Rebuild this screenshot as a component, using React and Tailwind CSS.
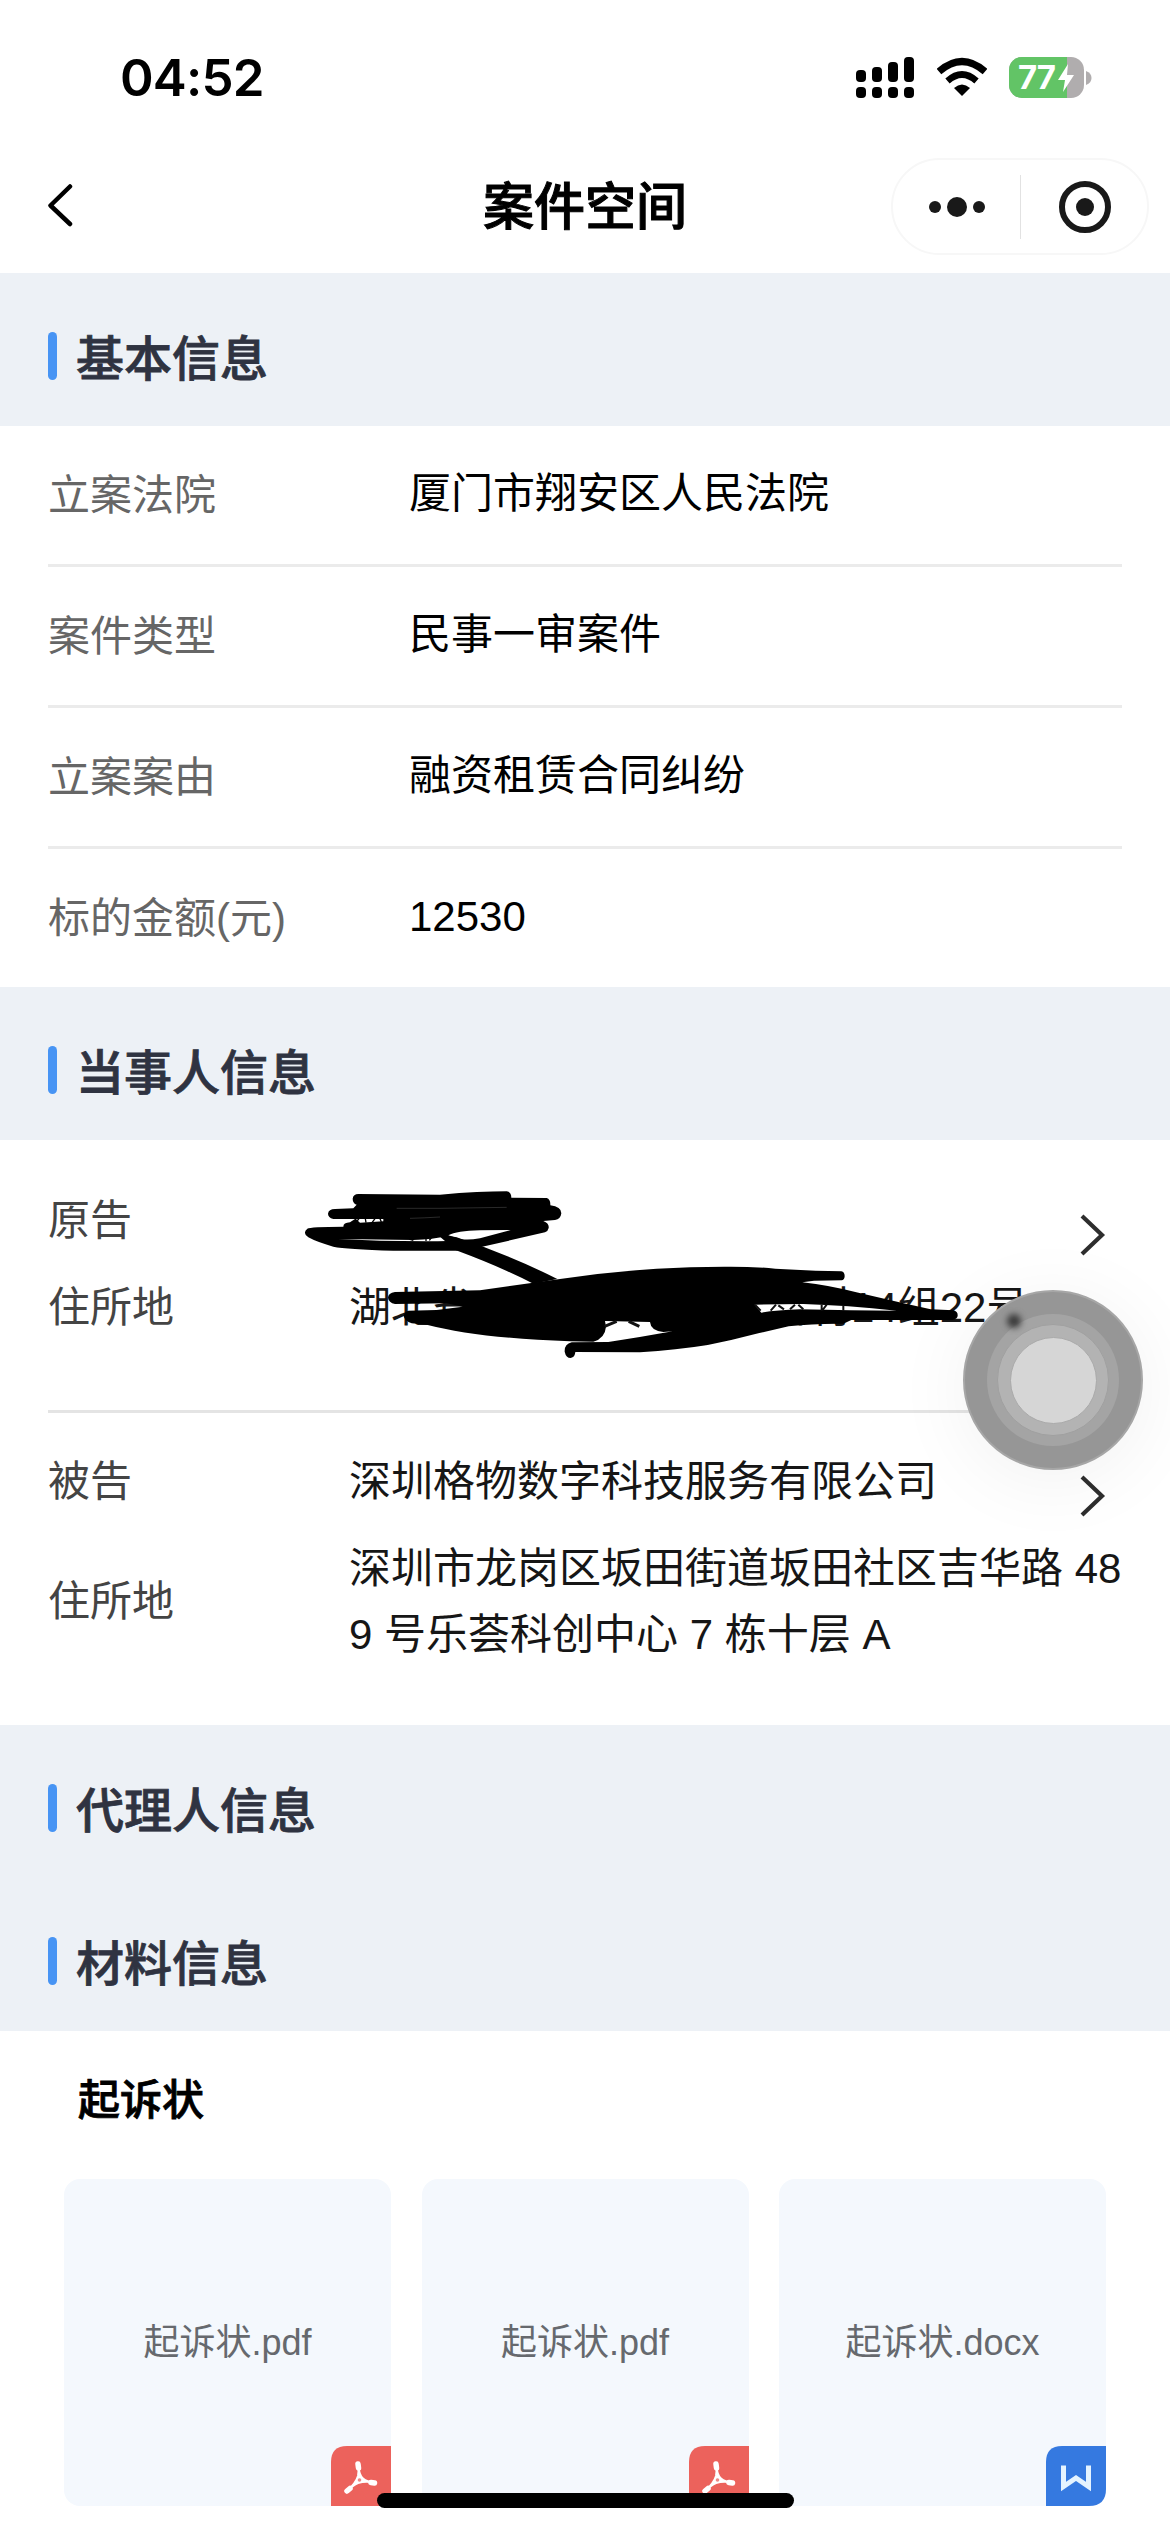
import React from 'react';

const basicInfo = [
  { label: '立案法院', value: '厦门市翔安区人民法院' },
  { label: '案件类型', value: '民事一审案件' },
  { label: '立案案由', value: '融资租赁合同纠纷' },
  { label: '标的金额(元)', value: '12530' },
];

const files = [
  { name: '起诉状.pdf', type: 'pdf' },
  { name: '起诉状.pdf', type: 'pdf' },
  { name: '起诉状.docx', type: 'docx' },
];

const StatusBar = () => (
  <div className="flex h-[155px] justify-between pl-[120px] pr-[78px]">
    <span className="mt-[46px] h-[64px] font-['Inter',sans-serif] text-[51px] leading-[64px] font-semibold tracking-[-0.8px]">
      04:52
    </span>
    <div className="mt-[57px] flex h-[41px] items-center">
      <svg width="58" height="41" viewBox="0 0 58 41">
        <rect x="0" y="13" width="10" height="12" rx="4" />
        <rect x="16" y="10" width="10" height="15" rx="4" />
        <rect x="32" y="5" width="10" height="20" rx="4" />
        <rect x="48" y="0" width="10" height="25" rx="4" />
        <rect x="0" y="30" width="10" height="11" rx="4" />
        <rect x="16" y="30" width="10" height="11" rx="4" />
        <rect x="32" y="30" width="10" height="11" rx="4" />
        <rect x="48" y="30" width="10" height="11" rx="4" />
      </svg>
      <svg className="ml-[23px]" width="50" height="41" viewBox="0 0 50 41">
        <path d="M2 14.5 Q25 -5.5 48 14.5" fill="none" stroke="#000" strokeWidth="7" />
        <path d="M10.5 24 Q25 11 39.5 24" fill="none" stroke="#000" strokeWidth="6.5" />
        <path d="M17 31 Q25 24 33 31 L25 39 Z" />
      </svg>
      <div className="relative ml-[22px] flex h-[41px] w-[75px] items-center overflow-hidden rounded-[13px] bg-[#b0adae]">
        <div className="h-full w-[58px] bg-[#62c466]" />
        <div className="absolute inset-0 flex items-center pl-[9px]">
          <span className="font-['Inter',sans-serif] text-[33px] leading-none font-bold tracking-[-1px] text-white">77</span>
          <svg className="ml-[2px]" width="18" height="28" viewBox="0 0 18 28">
            <path d="M11 0 L1 16 H8 L6 28 L17 11 H10 Z" fill="#fff" />
          </svg>
        </div>
      </div>
      <svg className="ml-[2px]" width="6" height="14" viewBox="0 0 6 14">
        <path d="M0 0 Q5.5 2 5.5 7 Q5.5 12 0 14 Z" fill="#b0adae" />
      </svg>
    </div>
  </div>
);

const NavBar = () => (
  <div className="grid h-[118px] grid-cols-[1fr_auto_1fr] items-start pt-[2px]">
    <svg className="mt-[26px] ml-[46px]" width="28" height="44" viewBox="0 0 28 44">
      <path d="M24 3.5 L4.5 22.5 L24 41" fill="none" stroke="#000" strokeWidth="4.5" strokeLinecap="round" strokeLinejoin="round" />
    </svg>
    <h1 className="mt-[19px] text-[51px] leading-[64px] font-medium text-black [-webkit-text-stroke:1px_#000]">案件空间</h1>
    <div className="mt-px mr-[21px] flex h-[97px] w-[258px] items-center justify-self-end rounded-full border-2 border-[#f7f7f7]">
      <div className="flex flex-1 items-center justify-center gap-[6px] pl-[2px]">
        <i className="size-3 rounded-full bg-[#191919]" />
        <i className="size-[20px] rounded-full bg-[#191919]" />
        <i className="size-3 rounded-full bg-[#191919]" />
      </div>
      <div className="h-[64px] w-px bg-[#e2e2e2]" />
      <div className="flex flex-1 items-center justify-center pl-[2px]">
        <div className="flex size-[52px] items-center justify-center rounded-full border-[6.5px] border-[#191919]">
          <i className="size-[18px] rounded-full bg-[#191919]" />
        </div>
      </div>
    </div>
  </div>
);

const SectionHeader = ({ title }) => (
  <div className="flex h-[153px] items-start bg-[#edf1f6] pt-[59px] pl-12">
    <div className="h-12 w-[9px] rounded-full bg-[#4794f4]" />
    <h2 className="-mt-[4px] ml-[19px] text-[48px] leading-[64px] font-medium text-[#2f3341] [-webkit-text-stroke:0.8px_#2f3341]">
      {title}
    </h2>
  </div>
);

const InfoRow = ({ label, value, last }) => (
  <div className={`mx-12 flex items-center ${last ? 'h-[138px]' : 'h-[141px] border-b-3 border-[#ebebeb]'}`}>
    <span className="w-[361px] pt-px text-[#666]">{label}</span>
    <span className="pb-[4px] text-black">{value}</span>
  </div>
);

const PartyRow = ({ label, children, arrow }) => (
  <div className="flex items-center leading-[66px]">
    <span className="w-[301px] shrink-0 text-[#444]">{label}</span>
    <div className="flex min-h-[66px] flex-1 items-center whitespace-nowrap text-[#161616]">{children}</div>
    {arrow && (
      <svg className="-mb-[28px] mr-[16px]" width="26" height="42" viewBox="0 0 26 42">
        <path d="M2 2 L22 21 L2 40" fill="none" stroke="#2e2e2e" strokeWidth="4.2" />
      </svg>
    )}
  </div>
);

// Hand drawn marker over the plaintiff's name and address
const Redaction = () => (
  <svg className="absolute top-[20px] left-[280px]" width="690" height="230" viewBox="0 0 2070 690">
    <path d="M235 102 L480 104 Q600 94 680 94 Q694 96 694 113 L800 114 Q812 118 811 136 Q844 140 844 160 Q842 178 825 180 L790 183 Q808 190 806 204 Q804 214 795 217 L600 262 L530 272 L340 272 Q200 268 160 260 Q110 246 85 232 Q66 219 82 206 Q90 200 190 200 Q190 188 210 187 L225 177 L160 177 Q144 173 144 161 Q146 147 165 147 L220 145 L230 134 Q218 130 218 116 Q220 102 235 102 Z" />
    <path d="M176 237 L400 240 Q460 238 500 228 L530 241 Q515 244 440 244 L300 242 Z" fill="#fff" />
    <path d="M505 226 Q530 213 600 211 L692 210 L600 235 Q560 242 538 236 Z" fill="#fff" />
    <path d="M228 177 L310 177 L310 184 L240 188 Z" fill="#fff" />
    <path d="M238 174 L228 188 M256 176 L258 188 M285 176 L276 188 M300 176 L304 186 M388 237 L400 241 M438 232 V243 M455 232 L448 241" fill="none" stroke="#000" strokeWidth="4" />
    <path d="M390 175 Q430 174 480 171 M350 145 L480 145 L680 142" fill="none" stroke="#555" strokeWidth="1.5" />
    <path d="M470 222 L530 232 Q700 290 832 357 L760 371 Q660 320 528 271 Z" />
    <path d="M345 396 Q324 400 324 413 Q326 428 345 432 L500 430 L548 440 L470 450 L385 452 Q373 455 371 468 Q374 484 395 490 L440 494 Q600 535 870 544 L940 545 Q975 535 978 500 L975 483 L1110 486 Q1112 512 1150 516 L1178 514 Q1080 532 985 546 L875 547 Q853 552 854 575 Q858 594 872 594 Q885 592 886 576 L1080 577 Q1190 570 1283 555 Q1360 540 1435 520 L1526 499 Q1600 490 1690 491 L1714 480 L2018 480 Q2034 476 2033 465 Q2033 454 2020 451 L1952 448 L1871 430 L1729 397 Q1648 376 1567 367 L1602 362 L1686 361 Q1694 358 1694 348 Q1694 336 1684 334 L1607 332 L1486 326 Q1410 319 1333 320 Q1230 320 1130 326 Q980 336 840 357 L600 391 Z" />
    <path d="M1424 434 Q1500 432 1570 432 Q1700 436 1850 452 Q1720 452 1560 448 Q1490 450 1444 458 Z" fill="#fff" />
    <path d="M1425 434 L1442 452 M1488 434 L1472 452 M1495 436 L1512 448 M1545 434 L1530 448 M1555 434 L1570 448 M1625 434 V452 M1640 434 L1628 450 M1690 436 V452" fill="none" stroke="#111" strokeWidth="6" />
    <path d="M1010 484 L974 499 M1046 484 L1078 499" fill="none" stroke="#111" strokeWidth="9" />
  </svg>
);

const AssistiveTouch = () => (
  <div className="absolute top-[1290px] left-[963px] flex size-[180px] items-center justify-center rounded-full border-2 border-[#a6a6a6] bg-[#969696] shadow-[0_10px_80px_rgba(0,0,0,0.06)]">
    <div className="absolute top-[22px] left-[42px] size-[14px] rounded-full bg-[#3a3a3a] blur-[3px]" />
    <div className="flex size-[132px] items-center justify-center rounded-full bg-[#a4a4a4]">
      <div className="flex size-[112px] items-center justify-center rounded-full border border-[#a0a0a0] bg-[#b3b3b3]">
        <div className="size-[87px] rounded-full border border-[#aaa] bg-[#d6d6d6]" />
      </div>
    </div>
  </div>
);

const PdfBadge = () => (
  <svg className="absolute right-0 bottom-0" width="60" height="60" viewBox="0 0 60 60">
    <path d="M16 0 H60 V60 H0 V16 Q0 0 16 0 Z" fill="#ec625c" />
    <path d="M27 18 Q28 29 32 32.5 Q36 36 43 36.5 Q34 35 27 37 Q22 39 16 45 Q25 37 27 30 Q28 25 27 18 Z" fill="#fff" stroke="#fff" strokeWidth="2" strokeLinejoin="round" />
    <path d="M27 18 L27.5 22 M40 36.5 L43.5 37 M19 42.5 L16 45" stroke="#fff" strokeWidth="5.5" strokeLinecap="round" />
    <circle cx="28.5" cy="34" r="1.8" fill="#ec8a86" />
  </svg>
);

const WordBadge = () => (
  <svg className="absolute right-0 bottom-0" width="60" height="60" viewBox="0 0 60 60">
    <path d="M16 0 H60 V43 Q60 60 43 60 H0 V16 Q0 0 16 0 Z" fill="#3579e0" />
    <path d="M17.5 19.5 V40.5 L30 32 L42.5 40.5 V19.5" fill="none" stroke="#e4f3ff" strokeWidth="5" />
  </svg>
);

const FileCard = ({ file }) => (
  <div className="relative flex h-[327px] items-center justify-center rounded-[16px] bg-[#f4f8fd] text-[36px] text-[#66696e]">
    {file.name}
    {file.type === 'pdf' ? <PdfBadge /> : <WordBadge />}
  </div>
);

const App = () => {
  return (
    <div className="relative h-[2532px] w-[1170px] overflow-hidden bg-white font-['Liberation_Sans','Noto_Sans_CJK_SC',sans-serif] text-[42px]">
      <StatusBar />
      <NavBar />

      <SectionHeader title="基本信息" />
      {basicInfo.map((row, index) => (
        <InfoRow key={row.label} {...row} last={index === basicInfo.length - 1} />
      ))}

      <SectionHeader title="当事人信息" />
      <div className="relative">
        <div className="mx-12 flex h-[273px] flex-col gap-[21px] border-b-3 border-[#e4e4e4] pt-[48px]">
          <PartyRow label="原告" arrow />
          <PartyRow label="住所地">
            <span className="w-[418px]">湖北省</span>
            <span>桥村14组22号</span>
          </PartyRow>
        </div>
        <Redaction />
      </div>
      <div className="mx-12 flex h-[312px] flex-col gap-[21px] pt-[36px]">
        <PartyRow label="被告" arrow>
          深圳格物数字科技服务有限公司
        </PartyRow>
        <PartyRow label="住所地">
          <p>
            深圳市龙岗区坂田街道坂田社区吉华路 48
            <br />9 号乐荟科创中心 7 栋十层 A
          </p>
        </PartyRow>
      </div>

      <SectionHeader title="代理人信息" />
      <SectionHeader title="材料信息" />
      <div className="px-16 pt-[38px]">
        <h3 className="ml-[14px] h-[110px] leading-[64px] font-medium text-black [-webkit-text-stroke:0.8px_#000]">起诉状</h3>
        <div className="grid grid-cols-3 gap-[30.5px]">
          {files.map((file, index) => (
            <FileCard key={index} file={file} />
          ))}
        </div>
      </div>

      <AssistiveTouch />
      <div className="absolute bottom-[24px] left-[377px] h-[15px] w-[417px] rounded-full bg-black" />
    </div>
  );
};

export default App;
